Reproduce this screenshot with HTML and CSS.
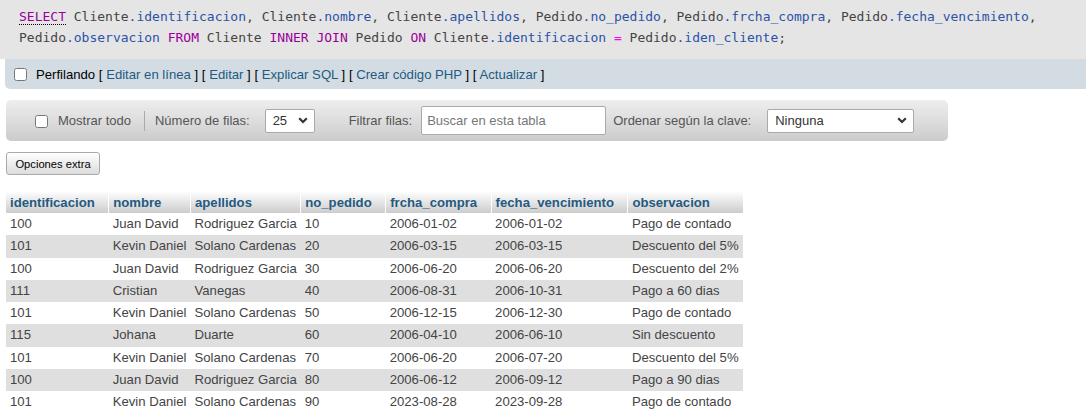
FILE: index.html
```html
<!DOCTYPE html>
<html lang="es">
<head>
<meta charset="utf-8">
<title>Resultado de consulta</title>
<link rel="stylesheet" href="styles.css">
</head>
<body>
<div class="result-query">
  <div class="sql-box">
    <code class="sql"><a class="kw kw-link">SELECT</a> Cliente<span class="id">.identificacion</span>, Cliente<span class="id">.nombre</span>, Cliente<span class="id">.apellidos</span>, Pedido<span class="id">.no_pedido</span>, Pedido<span class="id">.frcha_compra</span>, Pedido<span class="id">.fecha_vencimiento</span>,<br>Pedido<span class="id">.observacion</span> <span class="kw">FROM</span> Cliente <span class="kw">INNER</span> <span class="kw">JOIN</span> Pedido <span class="kw">ON</span> Cliente<span class="id">.identificacion</span> <span class="op">=</span> Pedido<span class="id">.iden_cliente</span>;</code>
  </div>
  <div class="tools-bar">
    <input type="checkbox" class="chk">
    <span class="tools-text">Perfilando [ <a class="lnk">Editar en línea</a> ] [ <a class="lnk">Editar</a> ] [ <a class="lnk">Explicar SQL</a> ] [ <a class="lnk">Crear código PHP</a> ] [ <a class="lnk">Actualizar</a> ]</span>
  </div>
</div>

<div class="navbar">
  <input type="checkbox" class="chk nav-chk">
  <span class="nav-label show-all">Mostrar todo</span>
  <span class="nav-sep"></span>
  <span class="nav-label rows-label">Número de filas:</span>
  <div class="fake-select sel-rows"><span>25</span><svg class="chev" width="10" height="7" viewBox="0 0 10 7"><path d="M1.2 1.3 L5 5 L8.8 1.3" fill="none" stroke="#333" stroke-width="2.2"/></svg></div>
  <span class="nav-label filter-label">Filtrar filas:</span>
  <div class="fake-input">Buscar en esta tabla</div>
  <span class="nav-label sort-label">Ordenar según la clave:</span>
  <div class="fake-select sel-key"><span>Ninguna</span><svg class="chev" width="10" height="7" viewBox="0 0 10 7"><path d="M1.2 1.3 L5 5 L8.8 1.3" fill="none" stroke="#333" stroke-width="2.2"/></svg></div>
</div>

<button class="extra-btn">Opciones extra</button>

<table class="data">
  <thead>
    <tr><th>identificacion</th><th>nombre</th><th>apellidos</th><th>no_pedido</th><th>frcha_compra</th><th>fecha_vencimiento</th><th>observacion</th></tr>
  </thead>
  <tbody>
    <tr><td>100</td><td>Juan David</td><td>Rodriguez Garcia</td><td>10</td><td>2006-01-02</td><td>2006-01-02</td><td>Pago de contado</td></tr>
    <tr><td>101</td><td>Kevin Daniel</td><td>Solano Cardenas</td><td>20</td><td>2006-03-15</td><td>2006-03-15</td><td>Descuento del 5%</td></tr>
    <tr><td>100</td><td>Juan David</td><td>Rodriguez Garcia</td><td>30</td><td>2006-06-20</td><td>2006-06-20</td><td>Descuento del 2%</td></tr>
    <tr><td>111</td><td>Cristian</td><td>Vanegas</td><td>40</td><td>2006-08-31</td><td>2006-10-31</td><td>Pago a 60 dias</td></tr>
    <tr><td>101</td><td>Kevin Daniel</td><td>Solano Cardenas</td><td>50</td><td>2006-12-15</td><td>2006-12-30</td><td>Pago de contado</td></tr>
    <tr><td>115</td><td>Johana</td><td>Duarte</td><td>60</td><td>2006-04-10</td><td>2006-06-10</td><td>Sin descuento</td></tr>
    <tr><td>101</td><td>Kevin Daniel</td><td>Solano Cardenas</td><td>70</td><td>2006-06-20</td><td>2006-07-20</td><td>Descuento del 5%</td></tr>
    <tr><td>100</td><td>Juan David</td><td>Rodriguez Garcia</td><td>80</td><td>2006-06-12</td><td>2006-09-12</td><td>Pago a 90 dias</td></tr>
    <tr><td>101</td><td>Kevin Daniel</td><td>Solano Cardenas</td><td>90</td><td>2023-08-28</td><td>2023-09-28</td><td>Pago de contado</td></tr>
  </tbody>
</table>
</body>
</html>
```

FILE: styles.css
```css
html, body {
  margin: 0;
  padding: 0;
  background: #fff;
}
body {
  font-family: "Liberation Sans", Arial, sans-serif;
  font-size: 13.15px;
  color: #444;
  overflow: hidden;
}

.result-query {
  display: flex;
  flex-direction: column;
}
.sql-box {
  background: #e5e5e5;
  height: 59px;
  box-sizing: border-box;
  padding: 6px 10px 0 19px;
}
.sql {
  font-family: "DejaVu Sans Mono", monospace;
  font-size: 13px;
  line-height: 21px;
  color: #444;
  white-space: nowrap;
}
.sql .kw { color: #909; }
.sql .kw-link {
  text-decoration: none;
  border-bottom: 1px dotted #000;
}
.sql .id { color: #2b52a8; }
.sql .op { color: #f0f; }

.tools-bar {
  margin-left: 5px;
  height: 30px;
  background: #d3dce3;
  border-bottom-left-radius: 5px;
  display: flex;
  align-items: center;
  padding-left: 9px;
}
.chk {
  width: 13px;
  height: 13px;
  margin: 0;
}
.tools-text {
  margin-left: 9px;
  color: #000;
}
.lnk {
  color: #235a81;
  text-decoration: none;
}

.navbar {
  margin: 11px 0 0 6px;
  width: 942px;
  height: 41px;
  box-sizing: border-box;
  border-radius: 5px;
  background: linear-gradient(#eee, #ccc);
  display: flex;
  align-items: center;
  padding-left: 29px;
  color: #555;
  font-size: 13px;
}
.nav-chk { margin-top: 1px; }
.show-all { margin-left: 10px; }
.nav-sep {
  width: 1px;
  height: 20px;
  background: #aaa;
  margin-left: 13px;
}
.rows-label { margin-left: 10px; }
.fake-select {
  background: #fff;
  border: 1px solid #aaa;
  border-radius: 2px;
  height: 24px;
  box-sizing: border-box;
  display: flex;
  align-items: center;
  justify-content: space-between;
  padding: 0 6px 0 7px;
  color: #333;
}
.sel-rows {
  width: 50px;
  margin-left: 15px;
}
.sel-key {
  width: 147px;
  margin-left: 16px;
}
.chev { display: block; }
.filter-label { margin-left: 34px; }
.fake-input {
  margin-left: 9px;
  width: 185px;
  height: 29px;
  box-sizing: border-box;
  border: 1px solid #aaa;
  border-radius: 2px;
  background: #fff;
  color: #777;
  display: flex;
  align-items: center;
  padding-left: 5px;
}
.sort-label { margin-left: 7px; }

.extra-btn {
  display: block;
  margin: 11px 0 0 6px;
  width: 94px;
  height: 23px;
  padding: 0;
  font-family: "Liberation Sans", Arial, sans-serif;
  font-size: 11.2px;
  color: #000;
  border: 1px solid #aaa;
  border-radius: 3px;
  background: linear-gradient(#fff, #ddd);
}

.data {
  margin: 16px 0 0 6px;
  border-collapse: collapse;
  font-size: 13.15px;
}
.data th {
  font-weight: bold;
  color: #235a81;
  text-align: left;
  padding: 0 13.5px 0 4px;
  height: 22px;
  background: linear-gradient(#fff, #ccc);
  white-space: nowrap;
}
.data th + th { border-left: 1px solid #fff; }
.data td {
  padding: 0 4px;
  height: 22.25px;
  line-height: 22px;
  white-space: nowrap;
  color: #444;
}
.data tbody tr:nth-child(even) td { background: #dfdfdf; }
.data tbody tr:nth-child(odd) td { background: #fff; }
```
